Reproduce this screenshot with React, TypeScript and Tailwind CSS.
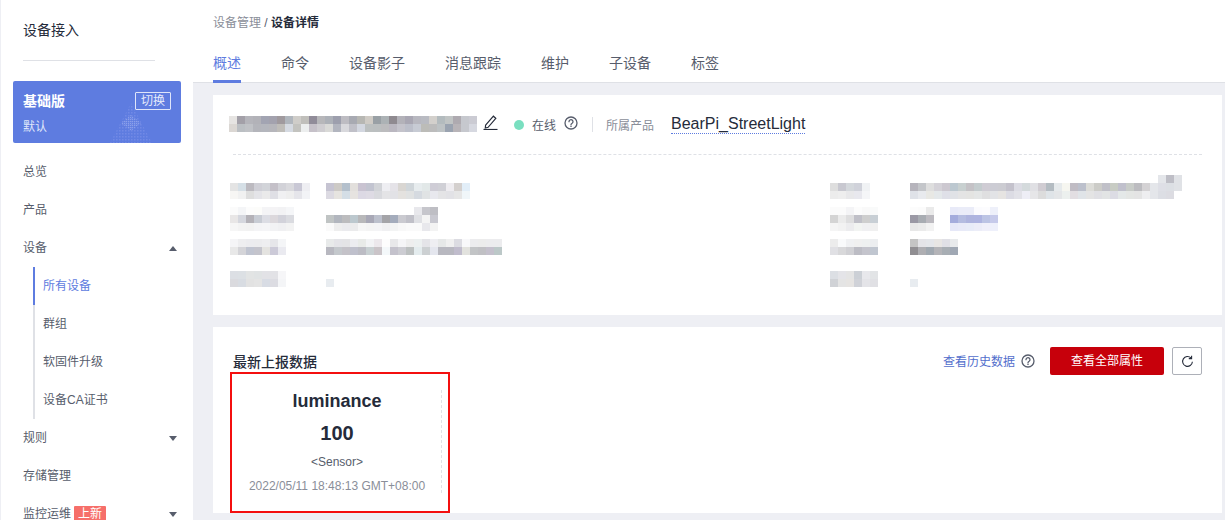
import React from 'react';

const font = { fontFamily: '"Liberation Sans", "Noto Sans CJK SC", sans-serif' };

type Cell = string;

// blurred-out values, one row = 8px cells
const Mosaic: React.FC<{ rows: Cell[][]; className?: string }> = ({ rows, className }) => (
  <div className={`flex flex-col ${className || ''}`}>
    {rows.map((row, i) => (
      <div key={i} className="flex h-2">
        {row.map((c, j) => (
          <div key={j} className="w-2 h-2 shrink-0" style={{ background: c }} />
        ))}
      </div>
    ))}
  </div>
);

const nameRows = [
  ['#e6e4e2', '#a3a0a8', '#b5b5bb', '#b2b2b8', '#a2a4b2', '#a3a2ae', '#a09a9e', '#b0b6bd', '#cfcdc9', '#c0bfbb', '#918c99', '#b7b7ba', '#adb1b8', '#9d9fad', '#bdbcc2', '#a8aab2', '#b7b7b3', '#cfcbc5', '#99a0a5', '#acb2b5', '#8f8a90', '#b3b2b9', '#a9a7b3', '#b8b8c0', '#b9bbc2', '#d3d0cc', '#b3bbbe', '#c0c4c4', '#aeaab0', '#c6c8ce', '#cbcbd3'],
  ['#dbd7d3', '#bbbfc3', '#c0c2c6', '#b4b5bb', '#b4b6bd', '#b6b6bb', '#bfbdb9', '#d5dae2', '#c3c3bf', '#eceeee', '#c6c1c9', '#cfcdd1', '#d9d9d7', '#b2b5bf', '#d8d8dc', '#c0c0c8', '#d3d7e0', '#bcc0c0', '#bbbfc0', '#bcbcbe', '#bab7c0', '#c4c3cb', '#bcbfca', '#c7cbd4', '#bcbcb8', '#bcbcbc', '#bdc2c4', '#9aa3b0', '#b8b4b8', '#c6c8ce', '#d6d8e0'],
];

const l1 = [
  ['#e4e4e4', '#d5dfe6', '#bcbac0', '#cfcfd6', '#d2d4d9', '#c4c0c8', '#d2d2d8', '#d9d9dd', '#c9c8d5', '#eeeef2'],
  ['#f7f6f4', '#f1f1f1', '#dedede', '#e4e4e8', '#eaeaea', '#dfdfe5', '#f0f0f2', '#eeeeee', '#e5e5ea', '#f2f3f6'],
];
const v1 = [
  ['#c6c4d2', '#cdcac6', '#b4c0cc', '#e2dfdc', '#c9c3d1', '#c2c4d0', '#d2d4d8', '#eeeef2', '#e5e3e8', '#d9d6d2', '#d0d6da', '#e7ecee', '#e2e8e8', '#cfcdd6', '#d0d0d6', '#eeecf0', '#d4d0ce', '#e2eef8'],
  ['#dcdae2', '#e6e4e0', '#d4dee6', '#e6e3e0', '#dcd9e4', '#dedbe4', '#d9dade', '#e4e4e6', '#e2e2e6', '#e4e2df', '#e0e2e2', '#d5dae0', '#e0e3e4', '#e8e8ee', '#e4e4e6', '#e2e2e6', '#e6e6e6', '#f0f6f9'],
];
const l2 = [
  ['#fbfbfb', '#f4f5f7', '#fcfcfc', '#fcfcfa', '#f4f4f6', '#f4f3f5', '#f2f2f4', '#f5f6f8'],
  ['#e8e6e6', '#d5d7de', '#b4b2b8', '#c8ccd4', '#dcdde4', '#dcd8dc', '#d2d2da', '#dadbe0'],
  ['#f6f6f6', '#f3f3f3', '#f2f2f2', '#f4f4f6', '#f5f5f7', '#f2f2f4', '#f0f0f2', '#f3f3f3'],
];
const v2 = [
  ['#ffffff', '#ffffff', '#ffffff', '#ffffff', '#ffffff', '#ffffff', '#ffffff', '#ffffff', '#ffffff', '#ffffff', '#ffffff', '#e8e8ec', '#c6c6cc', '#bebec4'],
  ['#c0c4c4', '#b2b6be', '#bcbcbe', '#bcc8ce', '#b8b8ba', '#a8a8b6', '#bcc0cc', '#a4a4a8', '#a4acbc', '#cacad0', '#c0c0c8', '#dfe0e4', '#f4f4f4', '#c8c8d0'],
  ['#fafafa', '#eeeeee', '#ebebee', '#ebebec', '#f6f6f6', '#f4f4f4', '#f4f4f6', '#f0f0f2', '#f3f4f4', '#f8f8f8', '#fafafa', '#fafafa', '#e8e8ec', '#f3f3f3'],
];
const l3 = [
  ['#f5f5f7', '#eeeef0', '#ececef', '#ececee', '#eeeef0', '#e6e6ea', '#f4f5f7'],
  ['#e8e8e8', '#d4d4d8', '#c0c4d0', '#c4c4cc', '#e4e3e0', '#cccad8', '#eaeaf0'],
];
const v3 = [
  ['#e8eaea', '#e4e4e8', '#e4e4e6', '#ececf0', '#e8eae8', '#f2f3f5', '#ece8ec', '#fdfdfd', '#e8e8ea', '#f5f5f7', '#eeeeee', '#ecf0f0', '#e4e4e8', '#eeeef2', '#e6e8e8', '#f0f0f0', '#dcdce2', '#f8f8fa', '#ececee', '#ececec', '#ececee', '#ececee'],
  ['#b8b8c0', '#c4c8cc', '#c4c2c8', '#bfc0cc', '#bcbcc4', '#c8d0d2', '#cac4c8', '#f4f8fa', '#c4c2cc', '#ccccd2', '#bcc0c0', '#e4ecee', '#ccd0d2', '#e4e6ee', '#b8b8c0', '#b8b8c0', '#c0bccc', '#e2e2de', '#c2c4c6', '#c0c0c4', '#c4c0cc', '#bcc8c8'],
];
const l4 = [
  ['#dcdfe4', '#dce0e4', '#e2e4e4', '#e0e3e4', '#e2e2e6', '#e2e2e6', '#f6f6f8'],
  ['#dadade', '#d8dce2', '#e2e2e2', '#e4e4e4', '#d8dce4', '#dcdce2', '#f4f5f7'],
];
const r1 = [
  ['#dedede', '#c8c8d0', '#d4d8dc', '#d0d2da', '#f0f2f4'],
  ['#ececec', '#eeeeee', '#e8e8ea', '#e8e8ee', '#f5f6f8'],
];
const rv1 = [
  [...Array(31).fill('transparent'), '#e4e6ea', '#bebec6', '#e0e2e6'],
  ['#b6b4bc', '#c4c6ca', '#dedede', '#d4d2d8', '#ccc8d0', '#bcc8d0', '#c8d0d0', '#c4c2c6', '#c4ccce', '#cfccd4', '#ccccd4', '#ccccd2', '#c4c2cc', '#dcdce4', '#d4dadc', '#e0e0e4', '#d0ccd2', '#b4bcc2', '#e6eaec', '#f6f6f0', '#c0bcc4', '#bcc0cc', '#dcdcd8', '#ccccc8', '#c0c0c8', '#c8ccc4', '#c0c0cc', '#c8ccc8', '#bcbcc0', '#d4d2d4', '#e4e6ea', '#dedfe6', '#dcdfe4', '#e0e2e6'],
  ['#dfe2e8', '#e8eaee', '#e8e8e4', '#e4e8ea', '#dfe0e8', '#e0e2e6', '#e4e4e4', '#e4e4e2', '#e4e6e6', '#dfdfe0', '#e2e3e6', '#e6e4e2', '#dcdce4', '#e2e2e8', '#eeeef6', '#e6e6e8', '#dcdcdc', '#dfe4e8', '#e4e6e8', '#ecf0ee', '#e2dee2', '#e0e4e8', '#e4e4e4', '#e0e0e4', '#e2e4e4', '#dcdce4', '#e4e8e8', '#e4e6e4', '#e4e4e4', '#eeeef0', '#e4e6ea', '#dcdee4', '#dcdce2'],
];
const r2 = [
  ['#fbfbfb', '#fbfbfb', '#f4f4f6', '#fcfcfc', '#f9f9f9', '#f9fafa'],
  ['#d4d4d4', '#ebebeb', '#dededf', '#c0c0c8', '#cecece', '#c8cfd5'],
  ['#f5f5f5', '#f2f2f2', '#ececee', '#f2f4f2', '#f0f0f2', '#f0f0f0'],
];
const rv2a = [
  ['#fcfcfc', '#fbfbfb', '#eaeaea'],
  ['#9a98a4', '#a8acb2', '#bcbac0'],
  ['#e8e8e8', '#ebebeb', '#f2f2f2'],
];
const rv2b = [
  ['#e8eaf8', '#eaecf8', '#eaecf8', '#fbfbfe', '#fcfcfe', '#eef0fa'],
  ['#a4acdc', '#b4bce0', '#aeb4de', '#aeb4e0', '#bcc4e4', '#c6caea'],
  ['#e6e8f8', '#e8eaf8', '#e8ecf8', '#ecedf8', '#f0f0fa', '#eef0fb'],
];
const r3 = [
  ['#ececec', '#f9fafb', '#f0f1f3', '#f0f0f0', '#eef0f0', '#eceef0'],
  ['#e0e0e4', '#d8d8da', '#d0d0d4', '#bcbcc4', '#c4c4cc', '#c0c6d0'],
];
const rv3 = [
  ['#c4c4c4', '#e4e4e8', '#e4e6ea', '#e8e6e4', '#e0e0e6', '#e8eaec'],
  ['#908e92', '#aeaeb2', '#a0a8b0', '#b4b4b8', '#a8aeb4', '#a0a8b4'],
];
const r4 = [
  ['#dcdfe4', '#e4e4e8', '#e4e4e4', '#ccd0d6', '#e8e8ec', '#e2e4e6'],
  ['#d0d2d6', '#e4e4e4', '#e6e4e2', '#d0d2d8', '#e4e4e8', '#e0e0e4'],
];
const dot = [['#e8ecf0']];

const HelpIcon: React.FC = () => (
  <svg width="14" height="14" viewBox="0 0 14 14" fill="none" stroke="#575d6c" strokeWidth="1.3">
    <circle cx="7" cy="7" r="6" />
    <path d="M5 5.7a2 2 0 1 1 3.1 1.6c-.7.4-1.1.8-1.1 1.5" strokeLinecap="round" />
    <path d="M7 9.8V11" />
  </svg>
);

const Caret: React.FC<{ up?: boolean }> = ({ up }) => (
  <svg width="8" height="5" viewBox="0 0 8 5" fill="#575d6c">
    <path d={up ? 'M4 0 8 5H0z' : 'M0 0h8L4 5z'} />
  </svg>
);

const NavItem: React.FC<{ label: string; caret?: 'up' | 'down'; badge?: string }> = ({ label, caret, badge }) => (
  <div className="h-[38px] flex items-center justify-between pl-[22px] pr-[16px] text-[12px] text-[#575d6c]">
    <span className="flex items-center">
      {label}
      {badge && <span className="ml-[3px] px-[4px] h-[16px] leading-[16px] bg-[#f66f6a] text-white text-[12px] rounded-[1px]">{badge}</span>}
    </span>
    {caret && <Caret up={caret === 'up'} />}
  </div>
);

const SubItem: React.FC<{ label: string; active?: boolean }> = ({ label, active }) => (
  <div className={`h-[38px] flex items-center pl-[8px] text-[12px] border-l-2 ${active ? 'border-[#5e7ce0] text-[#5e7ce0]' : 'border-[#dfe1e6] text-[#575d6c]'}`}>
    {label}
  </div>
);

const InfoRow: React.FC<{ label: Cell[][]; labelWidth: string; className?: string; children: React.ReactNode }> = ({ label, labelWidth, className, children }) => (
  <div className={`flex items-end ${className || ''}`}>
    <Mosaic rows={label} className={labelWidth} />
    {children}
  </div>
);

const Card: React.FC<{ className?: string; children: React.ReactNode }> = ({ className, children }) => (
  <div className={`bg-white ${className || ''}`}>{children}</div>
);

const tabs = ['概述', '命令', '设备影子', '消息跟踪', '维护', '子设备', '标签'];

export default function App() {
  return (
    <div className="flex w-[1225px] h-[520px] overflow-hidden bg-[#eeeff4]" style={font}>
      {/* Sidebar */}
      <aside className="w-[192px] ml-px shrink-0 h-full bg-white overflow-hidden">
        <div className="h-[61px] ml-[22px] border-b border-[#dfe1e6] flex items-start pt-[21px] text-[14px] leading-[18px] text-[#252b3a] w-[132px]">
          设备接入
        </div>
        <div className="relative mt-[20px] mx-[12px] h-[62px] rounded-[2px] bg-[#5e7ce0] text-white overflow-hidden">
          <svg className="absolute left-[97px] top-[22px]" width="42" height="40" viewBox="0 0 42 40">
            <defs>
              <pattern id="dots" width="3" height="3" patternUnits="userSpaceOnUse">
                <rect width="1.5" height="1.5" fill="#7189e5" />
              </pattern>
              <pattern id="dotsLight" width="2" height="2" patternUnits="userSpaceOnUse">
                <rect width="1.2" height="1.2" fill="#8ba0ea" />
              </pattern>
            </defs>
            <path d="M21 0 42 40H0z" fill="url(#dots)" />
            <path d="M21 12 31 20 21 28 11 20z" fill="url(#dotsLight)" />
          </svg>
          <div className="absolute left-[10px] top-[12px] text-[14px] leading-[16px] font-bold">基础版</div>
          <div className="absolute left-[10px] top-[39px] text-[12px] leading-[14px] text-[#dfe5fa]">默认</div>
          <div className="absolute right-[10px] top-[11px] h-[18px] w-[36px] border border-[#dfe5fa] rounded-[1px] text-[12px] leading-[16px] text-center text-[#e6ebfb]">切换</div>
        </div>
        <div className="mt-[10px]">
          <NavItem label="总览" />
          <NavItem label="产品" />
          <NavItem label="设备" caret="up" />
          <div className="ml-[32px]">
            <SubItem label="所有设备" active />
            <SubItem label="群组" />
            <SubItem label="软固件升级" />
            <SubItem label="设备CA证书" />
          </div>
          <NavItem label="规则" caret="down" />
          <NavItem label="存储管理" />
          <NavItem label="监控运维" caret="down" badge="上新" />
        </div>
      </aside>

      {/* Main */}
      <main className="flex-1 min-w-0 h-full">
        <header className="h-[83px] bg-white border-b border-[#dfe1e6] pl-[20px]">
          <div className="pt-[14px] text-[12px] leading-[18px] text-[#8a8e99]">
            设备管理 <span className="text-[#575d6c]">/</span> <span className="font-bold text-[#252b3a]">设备详情</span>
          </div>
          <nav className="flex mt-[21px] gap-[40px] text-[14px] leading-[18px] text-[#575d6c]">
            {tabs.map((t, i) => (
              <div key={t} className={`h-[30px] pt-px ${i === 0 ? 'text-[#5e7ce0] border-b-[3px] border-[#5e7ce0]' : ''}`}>
                {t}
              </div>
            ))}
          </nav>
        </header>

        <div className="pl-[20px] pr-[3px] pt-[12px]">
          <Card className="h-[220px] px-[20px]">
            <div className="flex items-center h-[60px] border-b border-dashed border-[#dfe1e6]">
              <Mosaic rows={nameRows} className="-ml-[4px] mb-px w-[248px]" />
              <svg className="ml-[6px] mb-[5px]" width="15" height="16" viewBox="0 0 15 16" fill="none" stroke="#252b3a" strokeWidth="1.2">
                <path d="M2.6 11.2 10.4 2.2l2.4 2.1-7.7 9-2.8.7z" />
                <path d="M.5 15.5h14" />
              </svg>
              <span className="ml-[16px] mt-px w-[10px] h-[10px] rounded-full bg-[#7adfc0]" />
              <span className="ml-[8px] mt-[3px] text-[12px] text-[#575d6c]">在线</span>
              <span className="ml-[8px] mb-[3px] flex"><HelpIcon /></span>
              <span className="ml-[14px] w-px h-[15px] bg-[#dfe1e6]" />
              <span className="ml-[13px] mt-[2px] text-[12px] text-[#8a8e99]">所属产品</span>
              <span className="ml-[17px] text-[16px] leading-[18px] text-[#252b3a] border-b border-dotted border-[#5e7ce0]">BearPi_StreetLight</span>
            </div>

            <div className="flex pt-[20px]">
              <div className="w-[600px] -ml-[3px] mt-[8px] flex flex-col gap-[8px]">
                <InfoRow label={l1} labelWidth="w-[96px]"><Mosaic rows={v1} /></InfoRow>
                <InfoRow label={l2} labelWidth="w-[96px]"><Mosaic rows={v2} /></InfoRow>
                <InfoRow label={l3} labelWidth="w-[96px]"><Mosaic rows={v3} /></InfoRow>
                <InfoRow label={l4} labelWidth="w-[96px]" className="mt-[8px]"><Mosaic rows={dot} /></InfoRow>
              </div>
              <div className="flex flex-col gap-[8px]">
                <InfoRow label={r1} labelWidth="w-[80px]"><Mosaic rows={rv1} /></InfoRow>
                <InfoRow label={r2} labelWidth="w-[80px]">
                  <div className="flex gap-[16px]">
                    <Mosaic rows={rv2a} />
                    <Mosaic rows={rv2b} />
                  </div>
                </InfoRow>
                <InfoRow label={r3} labelWidth="w-[80px]"><Mosaic rows={rv3} /></InfoRow>
                <InfoRow label={r4} labelWidth="w-[80px]" className="mt-[8px]"><Mosaic rows={dot} /></InfoRow>
              </div>
            </div>
          </Card>

          <Card className="mt-[12px] h-[186px] px-[20px]">
            <div className="flex items-center justify-between pt-[20px]">
              <div className="text-[14px] leading-[20px] font-medium text-[#252b3a] mt-[2px]">最新上报数据</div>
              <div className="flex items-center">
                <span className="mt-px text-[12px] text-[#526ecc]">查看历史数据</span>
                <span className="ml-[6px] flex"><HelpIcon /></span>
                <button className="ml-[15px] w-[114px] h-[28px] rounded-[2px] bg-[#c7000b] text-white text-[12px]">查看全部属性</button>
                <button className="ml-[8px] w-[30px] h-[28px] rounded-[2px] border border-[#adb0b8] flex items-center justify-center">
                  <svg width="13" height="13" viewBox="0 0 13 13" fill="none" stroke="#252b3a" strokeWidth="1.1">
                    <path d="M11.4 6.8A4.9 4.9 0 1 1 10 3" />
                    <path d="M10.6 .8v2.8H7.8" />
                  </svg>
                </button>
              </div>
            </div>
            <div className="-ml-[3px] -mt-[3px] w-[220px] h-[141px] border-[2px] border-[#f40f0f]">
              <div className="relative h-full pr-[6px] flex flex-col items-center pt-[17px]">
                <div className="text-[18px] leading-[20px] font-bold text-[#252b3a]">luminance</div>
                <div className="mt-[11px] text-[20px] leading-[22px] font-bold text-[#252b3a]">100</div>
                <div className="mt-[11px] text-[12px] leading-[14px] text-[#575d6c]">&lt;Sensor&gt;</div>
                <div className="mt-[10px] text-[12px] leading-[14px] text-[#8a8e99]">2022/05/11 18:48:13 GMT+08:00</div>
                <div className="absolute right-[6px] top-[16px] h-[103px] border-r border-dashed border-[#dfe1e6]" />
              </div>
            </div>
          </Card>
        </div>
      </main>
    </div>
  );
}
